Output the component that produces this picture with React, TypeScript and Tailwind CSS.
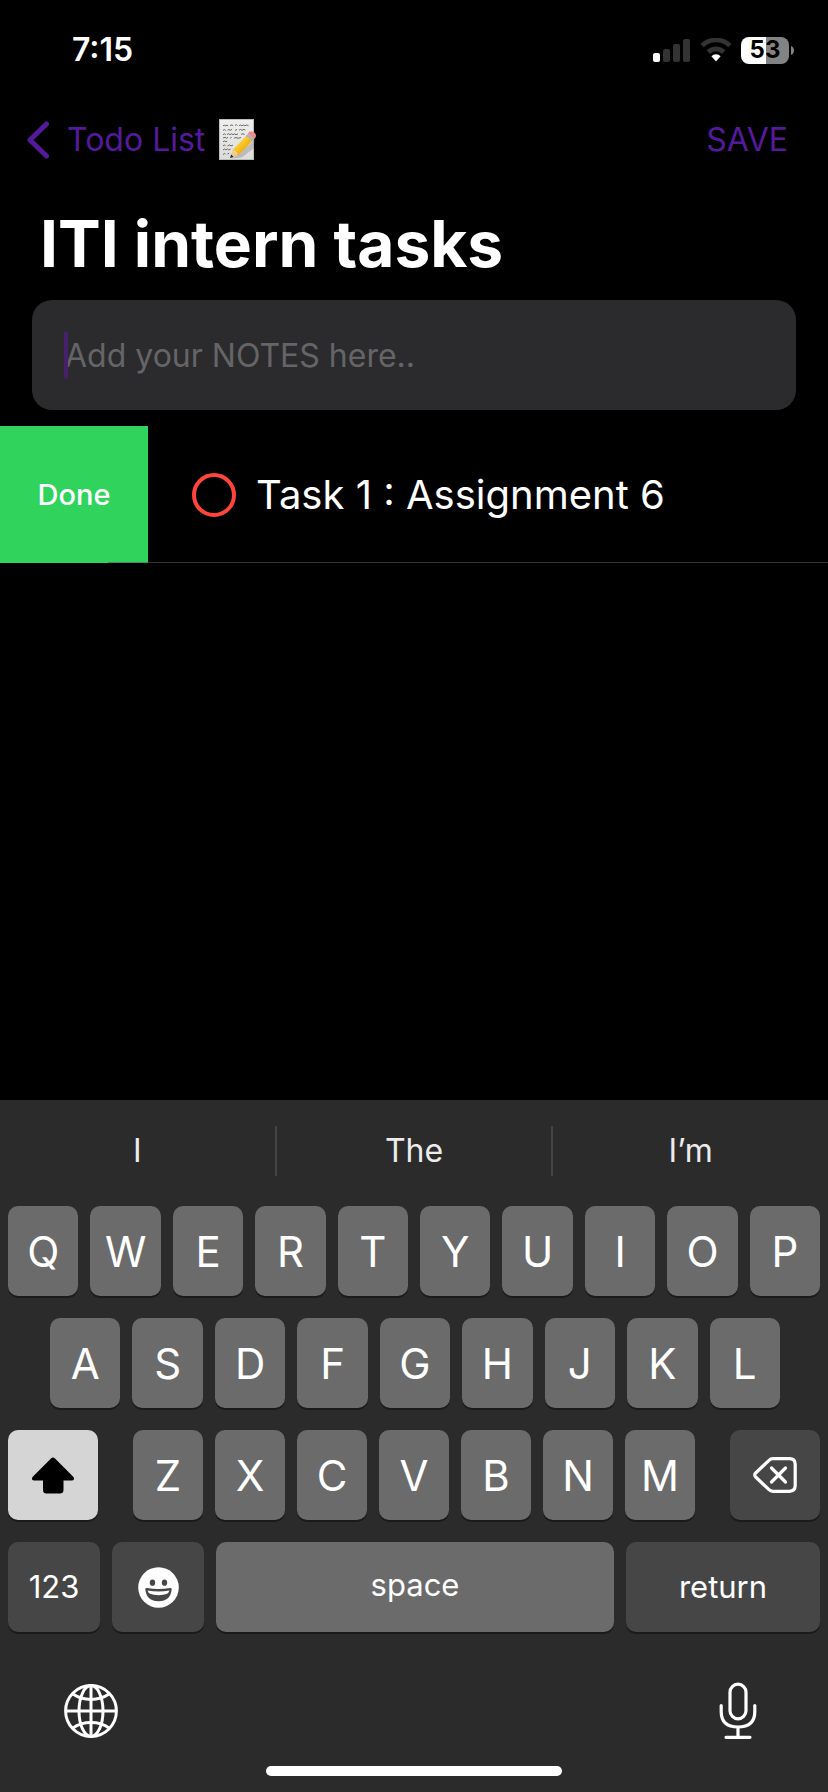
import React from "react";

function SignalIcon() {
  return (
    <svg width="37" height="23" viewBox="0 0 37 23" aria-hidden="true">
      <rect x="0" y="14" width="7" height="9" rx="2" fill="#fff" />
      <rect x="10" y="10" width="7" height="13" rx="2" fill="#333" />
      <rect x="20" y="5" width="7" height="18" rx="2" fill="#333" />
      <rect x="30" y="0" width="7" height="23" rx="2" fill="#333" />
    </svg>
  );
}

function WifiIcon() {
  return (
    <svg width="32" height="24" viewBox="0 0 32 24" fill="none" aria-hidden="true">
      <path d="M2.2 7.6a19.6 19.6 0 0 1 27.6 0" stroke="#333" strokeWidth="4.6" />
      <path d="M8.2 14a11.2 11.2 0 0 1 15.6 0" stroke="#333" strokeWidth="4.6" />
      <path d="M11.4 18.2a6.6 6.6 0 0 1 9.2 0l-4 4.6q-.6.7-1.2 0z" fill="#fff" />
    </svg>
  );
}

function StatusBar() {
  return (
    <div className="flex h-25 items-center justify-between pr-[34px] pl-[72px]">
      <span className="text-[32px] font-semibold">7:15</span>
      <div className="flex items-center">
        <SignalIcon />
        <div className="ml-[10px]">
          <WifiIcon />
        </div>
        <div className="ml-[9px] flex h-[27px] w-12 items-center justify-center rounded-lg bg-[linear-gradient(to_right,#fff_52%,#838383_52%)] text-2xl font-bold text-black">
          53
        </div>
        <svg className="ml-[2px]" width="3" height="9" viewBox="0 0 3 9" aria-hidden="true">
          <path d="M0 0q3 1.4 3 4.5T0 9z" fill="#838383" />
        </svg>
      </div>
    </div>
  );
}

function MemoIcon() {
  return (
    <svg width="38" height="42" viewBox="0 0 38 42" role="img" aria-label="memo">
      <defs>
        <linearGradient id="paper" x1="0" y1="0" x2="0" y2="1">
          <stop offset="0" stopColor="#efefed" />
          <stop offset="1" stopColor="#dcdcda" />
        </linearGradient>
        <linearGradient id="pencil" x1="0" y1="0" x2="1" y2="1">
          <stop offset="0.2" stopColor="#ffdc4a" />
          <stop offset="0.6" stopColor="#f5b514" />
          <stop offset="1" stopColor="#c98208" />
        </linearGradient>
      </defs>
      <rect x="0.5" y="0.5" width="34" height="40" fill="url(#paper)" stroke="#b9bcbc" />
      <g stroke="#4a4a4a" strokeWidth="0.8" fill="none">
        <path d="M4 6.8l1.6-.8 1 1 1.4-.9 1.2.8M11 6.6l2-.7 1.2.9M16 6.5l1.4-.8 1 1M20 6.6l1.6-.6 1.3.8 1.6-.8 1.4.8 1.6-.8 2 .6" />
        <path d="M4 11.4l1.6-.8 1.2 1M8.6 11.2l1.4-.8 1.2.9 1.8-.9M16 11.4l2-.9M20 11.2l1.6-.8 1.4.9 2-.9 1.4.8" />
        <path d="M4 15.6l1.6-.7 1.2.8M8 15.5l1.6-.8 1.4 1 1.6-.9 1.4.9 1.6-.9 1.4.9 2-.8M22 15.4l2-.7 1.6.8" />
        <path d="M4 19l2-.7 1.4.9 1.6-.8M11 19.2l1.6-.8M15 19.2l2-.7 2 .8 3-.8" />
        <path d="M4 22.8l1.6-.8 1.4.8 1.2-.6" />
        <path d="M4 26.8l1.4-.8 1.2.8M8.6 26.8l2-.8 1.4.9 2-.8" />
        <path d="M4 31l1.6-1 1.2.9 1.6-1 1.2 1 2-.8" />
        <path d="M4 35.6l1.6-1.2 1 1M8.4 35l1.8-.8" />
      </g>
      <path d="M13 39.5l20-16 3-6-1.5 12-12 9z" fill="#777" opacity="0.35" />
      <path d="M11.4 38.4l2.4-7.6 5.2 5.6z" fill="#f1c990" />
      <path d="M11 39l1.2-3.6 2.4 2.5z" fill="#222" />
      <path d="M13.6 31l14-14.6q4.6.8 6 5.4L18.8 36.4q-1-4.4-5.2-5.4z" fill="url(#pencil)" />
      <path d="M26.6 17.2l2.2-2.2q4.4 1.4 5.6 5.4l-2.2 2.4q-1.2-4.2-5.6-5.6z" fill="#a9b3bb" />
      <path d="M28.8 15q.8-2.8 3.2-2.8 4 .4 5 4 .4 2.4-2.6 4.2-1.2-4-5.6-5.4z" fill="#f0888a" />
    </svg>
  );
}

function NavBar() {
  return (
    <nav className="flex h-20 items-center justify-between pr-10 pl-[27px] text-[32px] text-[#551a9b]">
      <a href="#lists" className="flex items-center">
        <svg width="22" height="38" viewBox="0 0 22 38" fill="none" aria-hidden="true">
          <path d="M19.5 3L3 19l16.5 16" stroke="currentColor" strokeWidth="5" strokeLinecap="round" strokeLinejoin="round" />
        </svg>
        <span className="ml-[18px]">Todo List</span>
        <span className="ml-[14px]">
          <MemoIcon />
        </span>
      </a>
      <button type="button">SAVE</button>
    </nav>
  );
}

function NoteField() {
  return (
    <div className="relative mx-8">
      <input
        type="text"
        aria-label="Add your notes"
        placeholder="Add your NOTES here.."
        className="block h-[110px] w-full rounded-[20px] bg-[#2b2b2d] px-[33px] text-[32px] text-white outline-none placeholder:text-[#656567] placeholder:opacity-100"
      />
      <span className="absolute top-[31px] left-8 h-12 w-1 rounded-full bg-[#47206d]" />
    </div>
  );
}

function TaskRow() {
  return (
    <div className="relative mt-4 flex h-[137px] items-stretch">
      <button type="button" className="w-[148px] shrink-0 bg-[#30d35b] text-[29px] font-medium">
        Done
      </button>
      <div className="flex items-center pl-11">
        <button type="button" aria-label="Mark Task 1 as done" className="size-11 rounded-full border-4 border-[#ff453a]" />
        <span className="pl-5 text-[40px]">Task 1 : Assignment 6</span>
      </div>
      <span className="absolute right-0 bottom-0 left-[108px] h-px bg-[#58585c]/60" />
    </div>
  );
}

type KeyProps = {
  children: React.ReactNode;
  className: string;
  label?: string;
};

function Key({ children, className, label }: KeyProps) {
  return (
    <button
      type="button"
      aria-label={label}
      className={`flex h-[90px] items-center justify-center rounded-[10px] shadow-[0_2px_0_#1a1a1a] ${className}`}
    >
      {children}
    </button>
  );
}

function Letters({ row }: { row: string }) {
  return (
    <>
      {row.split("").map((letter) => (
        <Key key={letter} className="min-w-0 flex-1 bg-[#6b6b6b] text-[42px]">
          {letter}
        </Key>
      ))}
    </>
  );
}

function ShiftIcon() {
  return (
    <svg width="42" height="37" viewBox="0 0 42 37" aria-hidden="true">
      <path
        d="M19 1.4q2-1.9 4 0L41 19.6q1.6 1.8.9 2.9-.5 1.1-2.2 1.1H31.5V33q0 3.6-3.6 3.6H14.6Q11 36.6 11 33v-9.4H2.3Q.6 23.6.1 22.5-.6 21.4 1 19.6z"
        fill="#000"
      />
    </svg>
  );
}

function DeleteIcon() {
  return (
    <svg
      width="44"
      height="36"
      viewBox="0 0 44 36"
      fill="none"
      stroke="#fff"
      strokeWidth="3.2"
      strokeLinecap="round"
      strokeLinejoin="round"
      aria-hidden="true"
    >
      <path d="M20 1.7h16.5q5.7 0 5.7 5.7v21.2q0 5.7-5.7 5.7H20q-2.4 0-4-1.6L2.7 20q-2-2 0-4L16 3.3q1.6-1.6 4-1.6z" />
      <path d="M18.5 11l14 14M32.5 11l-14 14" />
    </svg>
  );
}

function EmojiIcon() {
  return (
    <svg width="41" height="41" viewBox="0 0 41 41" aria-hidden="true">
      <circle cx="20.5" cy="20.5" r="20.3" fill="#fff" />
      <ellipse cx="14.5" cy="15.7" rx="2.7" ry="3.1" fill="#464646" />
      <ellipse cx="26.5" cy="15.7" rx="2.7" ry="3.1" fill="#464646" />
      <path d="M7.3 22.3q0-1.6 1.7-1.3 11.5 2.2 23 0 1.7-.3 1.7 1.3Q32.5 34.3 20.5 34.3T7.3 22.3z" fill="#464646" />
      <path d="M9.6 23.6q10.9 2 21.8 0-.6 4.6-10.9 4.6T9.6 23.6z" fill="#fff" />
    </svg>
  );
}

function GlobeIcon() {
  return (
    <svg width="54" height="54" viewBox="0 0 54 54" fill="none" stroke="#fff" strokeWidth="3" aria-hidden="true">
      <circle cx="27" cy="27" r="25.4" />
      <ellipse cx="27" cy="27" rx="12" ry="25.4" />
      <path d="M27 1.6v50.8M1.6 27h50.8" />
      <path d="M8.6 9.8q8 5.6 18.4 5.6t18.4-5.6M8.6 44.2q8-5.6 18.4-5.6t18.4 5.6" />
    </svg>
  );
}

function MicIcon() {
  return (
    <svg width="38" height="58" viewBox="0 0 38 58" fill="none" stroke="#fff" strokeWidth="3.2" strokeLinecap="round" aria-hidden="true">
      <rect x="11" y="2.2" width="16" height="34.6" rx="8" />
      <path d="M2.2 23.5v6q0 15.5 16.8 15.5t16.8-15.5v-6M19 45v10M7 55.3h24" />
    </svg>
  );
}

function Keyboard() {
  return (
    <section aria-label="Keyboard" className="bg-[#2b2b2b]">
      <div className="flex h-[106px] items-center pb-1 text-[32px] text-[#ececec]">
        <button type="button" className="flex-1">I</button>
        <span className="h-[50px] w-[2px] bg-[#444]" />
        <button type="button" className="flex-1">The</button>
        <span className="h-[50px] w-[2px] bg-[#444]" />
        <button type="button" className="flex-1">I’m</button>
      </div>

      <div className="flex flex-col gap-[22px]">
        <div className="flex gap-3 px-2">
          <Letters row="QWERTYUIOP" />
        </div>
        <div className="flex gap-3 pr-12 pl-[50px]">
          <Letters row="ASDFGHJKL" />
        </div>
        <div className="flex gap-[35px] px-2">
          <Key label="Shift" className="w-[90px] shrink-0 bg-[#d5d5d5]">
            <ShiftIcon />
          </Key>
          <div className="flex min-w-0 flex-1 gap-3">
            <Letters row="ZXCVBNM" />
          </div>
          <Key label="Delete" className="w-[90px] shrink-0 bg-[#464646]">
            <DeleteIcon />
          </Key>
        </div>
        <div className="flex gap-3 px-2 text-[31px]">
          <Key className="w-[92px] shrink-0 bg-[#464646]">123</Key>
          <Key label="Emoji" className="w-[92px] shrink-0 bg-[#464646]">
            <EmojiIcon />
          </Key>
          <Key className="min-w-0 flex-1 bg-[#6b6b6b] pb-1">space</Key>
          <Key className="w-[194px] shrink-0 bg-[#464646]">return</Key>
        </div>
      </div>

      <div className="mt-[50px] flex items-center justify-between pr-[71px] pl-16">
        <button type="button" aria-label="Next keyboard">
          <GlobeIcon />
        </button>
        <button type="button" aria-label="Dictate">
          <MicIcon />
        </button>
      </div>
      <div className="flex justify-center pt-[26px] pb-4">
        <span className="h-[10px] w-[296px] rounded-full bg-white" />
      </div>
    </section>
  );
}

export default function App() {
  return (
    <div className="flex min-h-screen flex-col bg-black font-['Inter','Liberation_Sans',sans-serif] text-white [&_svg]:block">
      <StatusBar />
      <NavBar />
      <main className="flex-1">
        <h1 className="pt-6 pb-4 pl-10 text-[64px] leading-[80px] font-bold">ITI intern tasks</h1>
        <NoteField />
        <TaskRow />
      </main>
      <Keyboard />
    </div>
  );
}
